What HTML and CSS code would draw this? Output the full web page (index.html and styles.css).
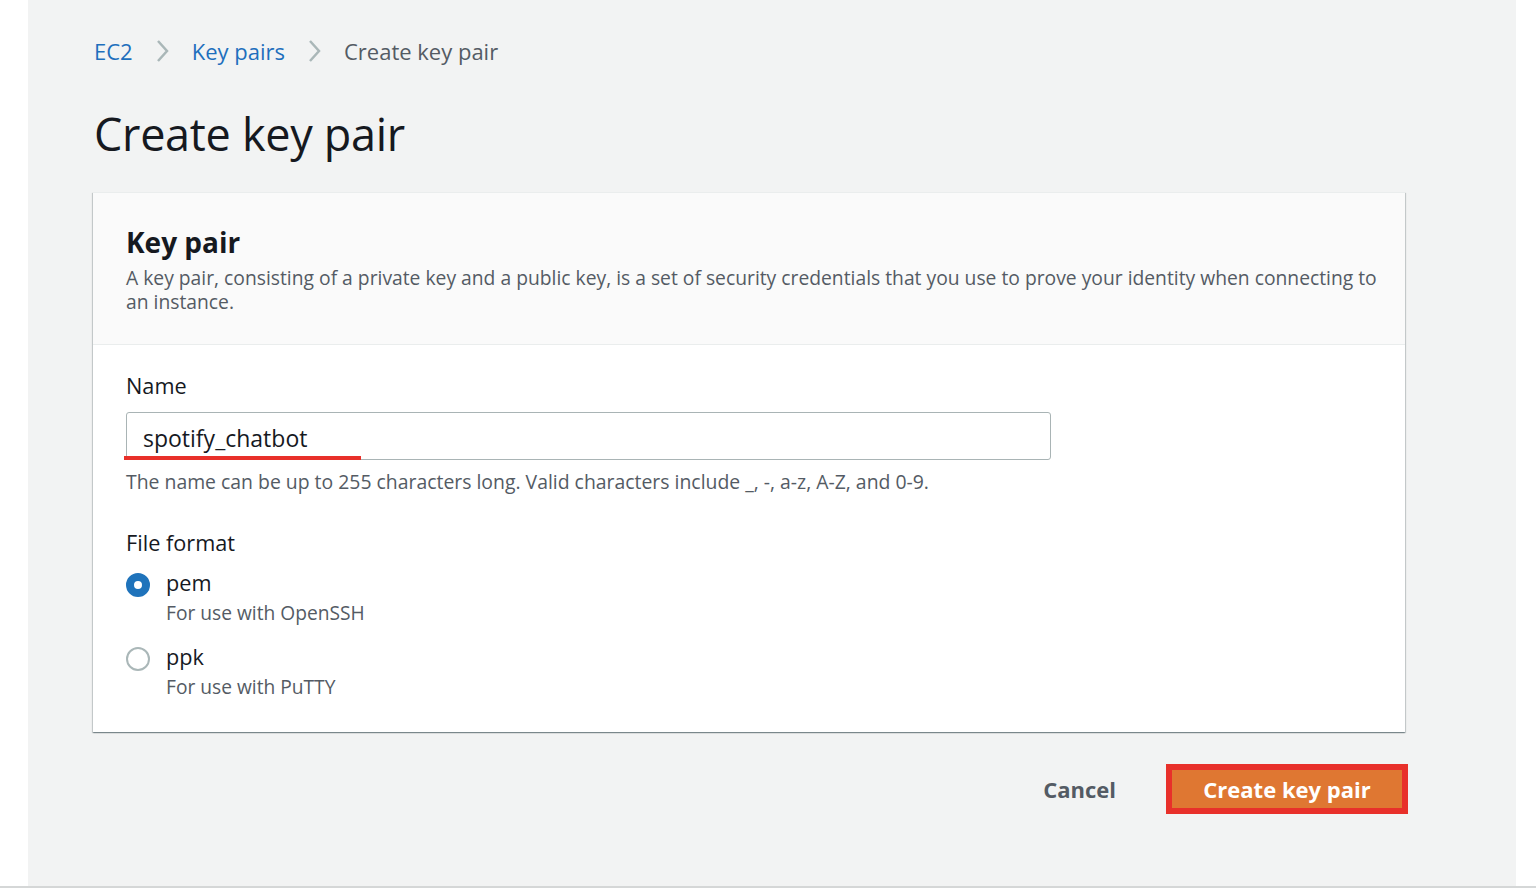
FILE: index.html
```html
<!DOCTYPE html>
<html lang="en">
<head>
<meta charset="utf-8">
<title>Create key pair</title>
<link rel="stylesheet" href="styles.css">
</head>
<body>
<div class="page">
  <div class="side"></div>
  <main class="main">
    <nav class="crumbs">
      <a class="crumb-link" href="#">EC2</a>
      <svg class="chev" viewBox="0 0 16 24" width="16" height="24"><path d="M3 2 L12 12 L3 22" fill="none" stroke="#aab7b8" stroke-width="2.5"/></svg>
      <a class="crumb-link" href="#">Key pairs</a>
      <svg class="chev" viewBox="0 0 16 24" width="16" height="24"><path d="M3 2 L12 12 L3 22" fill="none" stroke="#aab7b8" stroke-width="2.5"/></svg>
      <span class="crumb-current">Create key pair</span>
    </nav>
    <h1 class="title">Create key pair</h1>

    <section class="card">
      <div class="card-head">
        <h2 class="card-title">Key pair</h2>
        <p class="card-desc">A key pair, consisting of a private key and a public key, is a set of security credentials that you use to prove your identity when connecting to an instance.</p>
      </div>
      <div class="card-body">
        <div class="field">
          <label class="label">Name</label>
          <div class="input-wrap">
            <div class="input">spotify_chatbot</div>
            <span class="mark"></span>
          </div>
          <p class="hint">The name can be up to 255 characters long. Valid characters include _, -, a-z, A-Z, and 0-9.</p>
        </div>
        <div class="field ff">
          <div class="label">File format</div>
          <div class="radio">
            <span class="dot on"></span>
            <div class="radio-text">
              <div class="radio-label">pem</div>
              <div class="radio-desc">For use with OpenSSH</div>
            </div>
          </div>
          <div class="radio">
            <span class="dot"></span>
            <div class="radio-text">
              <div class="radio-label">ppk</div>
              <div class="radio-desc">For use with PuTTY</div>
            </div>
          </div>
        </div>
      </div>
    </section>

    <div class="actions">
      <button class="btn-link">Cancel</button>
      <div class="highlight"><button class="btn-primary">Create key pair</button></div>
    </div>
  </main>
  <div class="side-r"></div>
</div>
</body>
</html>
```

FILE: styles.css
```css
html, body {
  margin: 0;
  padding: 0;
  background: #ffffff;
}
body {
  font-family: "Open Sans", "Noto Sans", Arial, sans-serif;
  color: #16191f;
}
.page {
  display: flex;
  height: 886px;
  border-bottom: 2px solid #d5d7d7;
}
.side {
  width: 28px;
  background: #ffffff;
}
.side-r {
  width: 20px;
  background: #ffffff;
}
.main {
  flex: 1;
  background: #f2f3f3;
  padding: 0 111px 0 65px;
}
.crumbs {
  display: flex;
  align-items: center;
  height: 24px;
  margin-top: 39px;
  margin-left: 1px;
  font-size: 22px;
}
.crumb-link {
  color: #1e6fbd;
  text-decoration: none;
}
.chev {
  margin: 0 21px 0 22px;
}
.crumb-current {
  color: #545b64;
}
.title {
  margin: 43px 0 0 1px;
  font-size: 45px;
  font-weight: 400;
  line-height: 56px;
  color: #16191f;
  letter-spacing: -0.3px;
}
.card {
  margin-top: 30px;
  background: #ffffff;
  border-top: 1px solid #eaeded;
  box-shadow: 0 1px 1px 0 rgba(0, 28, 36, 0.3), 1px 1px 1px 0 rgba(0, 28, 36, 0.15), -1px 1px 1px 0 rgba(0, 28, 36, 0.15);
}
.card-head {
  background: #fafafa;
  border-bottom: 1px solid #eaeded;
  padding: 29px 20px 30px 33px;
}
.card-title {
  margin: 0;
  font-size: 28px;
  font-weight: 700;
  line-height: 40px;
}
.card-desc {
  margin: 4px 0 0 0;
  font-size: 19.3px;
  line-height: 24px;
  color: #545b64;
}
.card-body {
  padding: 26px 33px 31px 33px;
}
.label {
  display: block;
  font-size: 21.7px;
  line-height: 30px;
}
.input-wrap {
  position: relative;
  width: 925px;
  margin-top: 11px;
}
.input {
  height: 46px;
  border: 1px solid #a9b4b5;
  border-radius: 3px;
  box-sizing: content-box;
  padding: 0 16px;
  font-size: 23px;
  line-height: 50px;
  color: #16191f;
}
.mark {
  position: absolute;
  left: -2px;
  top: 44px;
  width: 237px;
  height: 4px;
  background: #e8302a;
}
.hint {
  margin: 9px 0 0 0;
  font-size: 19.4px;
  line-height: 26px;
  color: #545b64;
}
.ff {
  margin-top: 33px;
}
.radio {
  display: flex;
  align-items: flex-start;
  margin-top: 10px;
}
.radio + .radio {
  margin-top: 15px;
}
.dot {
  width: 20px;
  height: 20px;
  border: 2px solid #aab7b8;
  border-radius: 50%;
  background: #ffffff;
  margin: 5px 16px 0 0;
  box-sizing: content-box;
  flex: none;
}
.dot.on {
  width: 8px;
  height: 8px;
  border: 8px solid #1f73bb;
}
.radio-label {
  font-size: 21.7px;
  line-height: 30px;
}
.radio-desc {
  font-size: 19.2px;
  line-height: 29px;
  color: #545b64;
}
.actions {
  display: flex;
  justify-content: flex-end;
  align-items: center;
  margin-top: 32px;
  margin-right: -3px;
}
.btn-link {
  background: none;
  border: none;
  font-family: inherit;
  font-size: 22px;
  font-weight: 700;
  color: #545b64;
  padding: 0;
  margin-right: 50px;
}
.highlight {
  border: 6px solid #e8302a;
}
.btn-primary {
  display: block;
  width: 230px;
  height: 38px;
  border: none;
  background: #df7732;
  color: #ffffff;
  font-family: inherit;
  font-size: 22px;
  font-weight: 700;
  padding: 0;
}
```
